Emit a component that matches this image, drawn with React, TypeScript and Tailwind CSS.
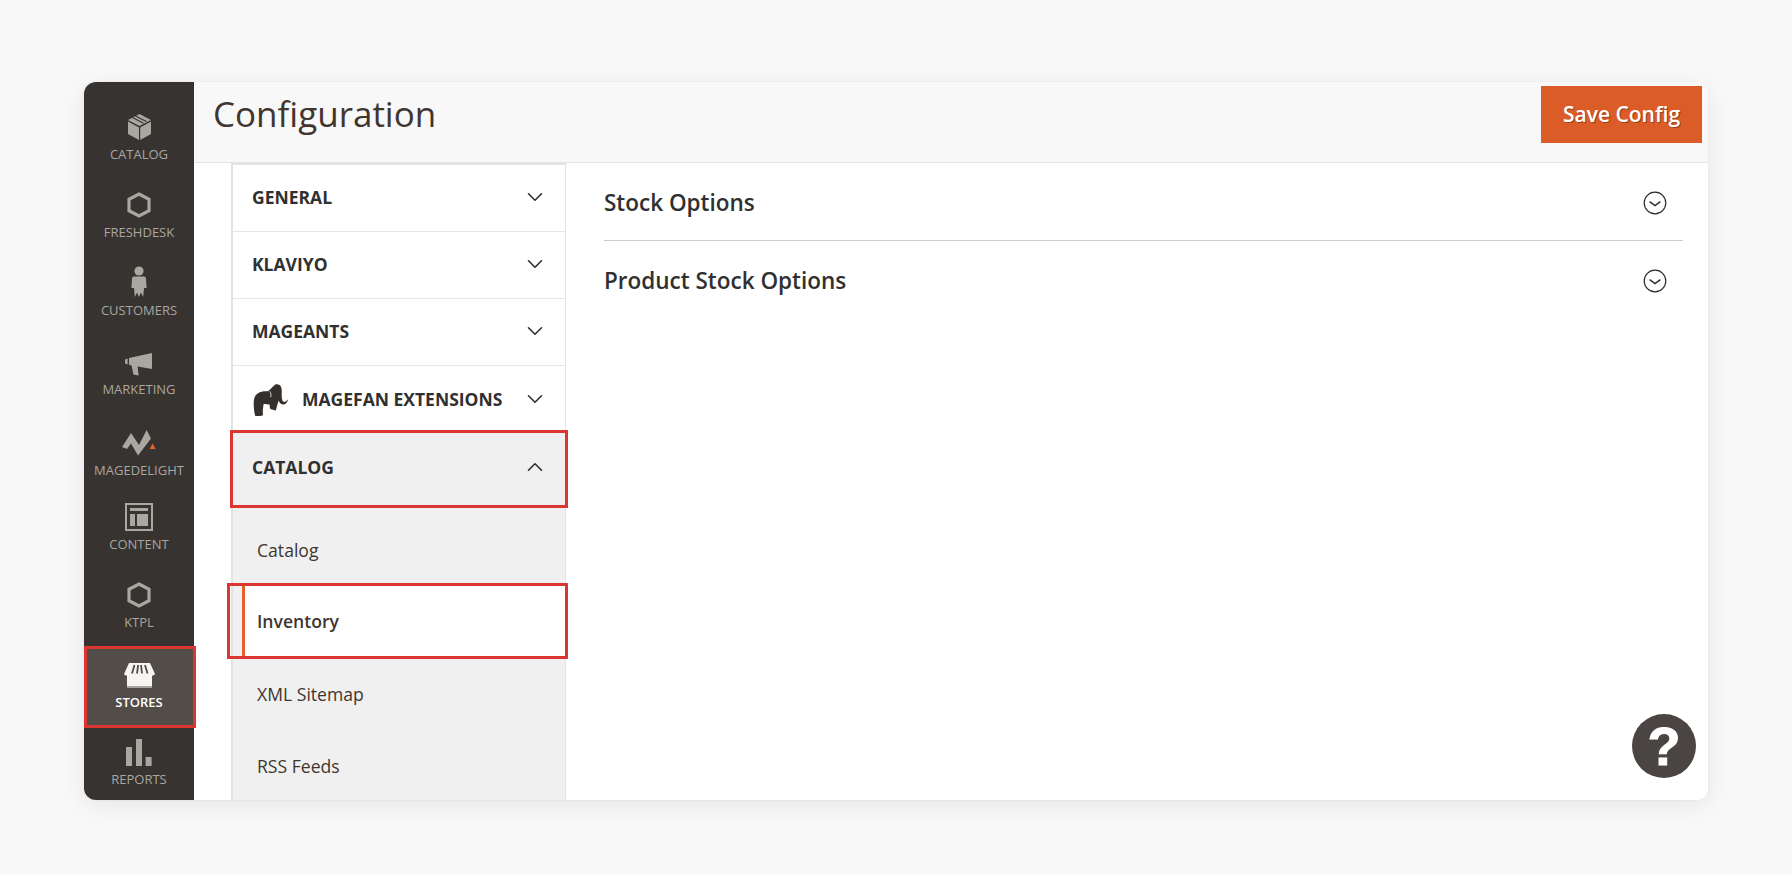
import { ChevronDown, ChevronUp } from "lucide-react";
import type { ReactNode } from "react";

const font = "font-['Open_Sans',sans-serif]";

function SideItem({
  label,
  icon,
  className = "",
}: {
  label: string;
  icon: ReactNode;
  className?: string;
}) {
  return (
    <div className={`flex flex-col items-center ${className}`}>
      <div className="flex h-[36px] items-center justify-center">{icon}</div>
      <div className="mt-px text-[13px] leading-4">{label}</div>
    </div>
  );
}

function Cube() {
  return (
    <svg width="23" height="26" viewBox="0 0 23 26" fill="currentColor">
      <path d="M11.5 0 L23 6 L11.5 12 L0 6 Z" />
      <path d="M0 7.6 L11 13.5 V26 L0 20 Z" />
      <path d="M23 7.6 L12.2 13.5 V26 L23 20 Z" />
      <path d="M7.5 2 L18.5 7.6 M4.5 3.6 L15.5 9.2" fill="none" stroke="#373330" strokeWidth="1.1" />
    </svg>
  );
}

function Hex() {
  return (
    <svg width="24" height="26" viewBox="0 0 24 26" fill="none" stroke="currentColor" strokeWidth="3.2">
      <path d="M12 2 L22 7.3 V18.7 L12 24 L2 18.7 V7.3 Z" />
    </svg>
  );
}

function Person() {
  return (
    <svg className="mb-[2px]" width="16" height="32" viewBox="0 0 16 32" fill="currentColor">
      <circle cx="8" cy="5" r="4.6" />
      <path d="M3.2 10.6 H12.8 C14.4 10.6 15 11.4 15 13 L15.6 22 H13 L12.2 31 L10 26.5 L8 31 L6 26.5 L3.8 31 L3 22 H0.4 L1 13 C1 11.4 1.6 10.6 3.2 10.6 Z" />
    </svg>
  );
}

function Megaphone() {
  return (
    <svg className="mt-[4px]" width="28" height="23" viewBox="0 0 28 23" fill="currentColor">
      <path d="M0 6.6 L2.6 5.6 V11.4 L0 10.4 Z" />
      <path d="M4 5 L27 0 V16 L12.6 13.6 L13.6 22.6 L8.4 21.4 L6.6 12.4 L4 11.8 Z" />
    </svg>
  );
}

function Delight() {
  return (
    <svg width="34" height="26" viewBox="0 0 34 26" fill="currentColor">
      <path d="M0 17 L9 3 L17 15 L24.6 0 L29 8.6 L16 25.4 L9 13.6 L5 19 Z" />
      <path d="M27.6 19 L30.6 13.4 L33.6 19 Z" fill="#e8622a" />
    </svg>
  );
}

function Content() {
  return (
    <svg width="28" height="28" viewBox="0 0 28 28" fill="currentColor">
      <path fillRule="evenodd" d="M0 0 H28 V28 H0 Z M2 2 V26 H26 V2 Z" />
      <rect x="5" y="5" width="18" height="3" />
      <rect x="5" y="11" width="5" height="12" />
      <rect x="12" y="11" width="11" height="12" />
    </svg>
  );
}

function Store() {
  return (
    <svg width="31" height="25" viewBox="0 0 31 25" fill="none">
      <path d="M5 0 H26 L31 11 C30 13 27 13 26 12 C25 13 22 13 21 12 C20 13 17 13 15.5 12 C14 13 11 13 10 12 C9 13 6 13 5 12 C4 13 1 13 0 11 Z" fill="#f7f5f1" />
      <rect x="3" y="12" width="25" height="11" fill="#f7f5f1" />
      <rect x="3" y="23" width="25" height="2" fill="#a8a49e" />
      <path d="M10.5 2 L8 10.5 M14.2 2 L13 10.5 M17 2 L18 10.5 M21 2 L23.5 10.5" stroke="#524d49" strokeWidth="1.8" />
    </svg>
  );
}

function Bars() {
  return (
    <svg width="26" height="27" viewBox="0 0 26 27" fill="currentColor">
      <rect x="0" y="8" width="6" height="19" />
      <rect x="10" y="0" width="6" height="27" />
      <rect x="19.6" y="18" width="6" height="9" />
    </svg>
  );
}

function Elephant() {
  return (
    <svg className="mt-[2px]" width="35" height="32" viewBox="0 0 105 97" fill="#33302e">
      <path d="M6 96 C2 80 0 60 3 45 C6 28 24 20 44 22 C52 18 58 8 66 2 C74 -1 84 2 86 14 C88 26 84 42 90 52 C94 56 100 54 104 47 L105 49 C102 60 92 66 84 60 C80 57 78 52 77 50 C75 58 72 66 70 76 L68 80 L52 76 C50 70 50 64 50 62 C44 62 38 62 32 60 C30 70 28 84 30 94 C24 98 12 98 6 96 Z" />
      <path d="M50 22 C54 28 55 34 53 40" fill="none" stroke="#fff" strokeWidth="2.4" />
    </svg>
  );
}

function CircleChevron() {
  return (
    <svg width="24" height="24" viewBox="0 0 24 24" fill="none" stroke="#2f2b29">
      <circle cx="12" cy="12" r="10.8" strokeWidth="1.2" />
      <path d="M6.6 10.6 L12 14.6 L17.4 10.6" strokeWidth="1.4" />
    </svg>
  );
}

function NavRow({
  children,
  className,
}: {
  children: ReactNode;
  className: string;
}) {
  return (
    <div className={`flex items-center justify-between pl-[19px] pr-[17px] text-[17.5px] font-bold text-[#303030] ${className}`}>
      {children}
    </div>
  );
}

function SubRow({
  children,
  className,
}: {
  children: ReactNode;
  className: string;
}) {
  return (
    <div className={`flex items-center pl-[24px] text-[17.6px] text-[#41362f] ${className}`}>
      {children}
    </div>
  );
}

export default function App() {
  return (
    <div className={`h-[875px] w-[1792px] overflow-hidden bg-[#f8f8f8] pl-[84px] pt-[82px] ${font}`}>
      <div className="relative flex h-[718px] w-[1624px] rounded-[10px] bg-white shadow-[0_6px_24px_rgba(0,0,0,0.07),0_0_2px_rgba(0,0,0,0.08)]">
        <aside className="relative h-full w-[110px] shrink-0 rounded-l-[12px] bg-[#373330] pt-[27px] text-[#aaa6a0]">
          <SideItem label="CATALOG" icon={<Cube />} />
          <SideItem label="FRESHDESK" icon={<Hex />} className="mt-[25px]" />
          <SideItem label="CUSTOMERS" icon={<Person />} className="mt-[25px]" />
          <SideItem label="MARKETING" icon={<Megaphone />} className="mt-[26px]" />
          <SideItem label="MAGEDELIGHT" icon={<Delight />} className="mt-[28px]" />
          <SideItem label="CONTENT" icon={<Content />} className="mt-[21px]" />
          <SideItem label="KTPL" icon={<Hex />} className="mt-[25px]" />
          <div className="relative mt-[16px] h-[82px] bg-[#524d49] pt-[11px] text-white">
            <SideItem label="STORES" icon={<Store />} className="font-semibold" />
            <div className="absolute -right-[2px] left-0 top-0 bottom-0 border-3 border-[#dc3632]" />
          </div>
          <SideItem label="REPORTS" icon={<Bars />} className="mt-[6px]" />
        </aside>

        <div className="flex min-w-0 flex-1 flex-col">
          <header className="flex h-[81px] items-start justify-between rounded-tr-[10px] border-b border-[#e3e3e3] bg-[#f8f8f8] pl-[19px] pr-[6px] pt-[4px]">
            <h1 className="mt-[3px] text-[35px] leading-[50px] font-normal text-[#41362f]">Configuration</h1>
            <button className="h-[57px] w-[161px] bg-[#dc5c27] text-[21px] font-semibold text-white [text-shadow:1px_1px_0_#9a3f18]">
              Save Config
            </button>
          </header>

          <div className="flex min-h-0 flex-1">
            <nav className="relative ml-[37px] h-full w-[335px] shrink-0 overflow-visible border-x-2 border-t-2 border-r-1 border-[#e3e3e3]">
              <NavRow className="h-[67px] border-b border-[#e6e6e6] pb-[2px]">
                GENERAL
                <ChevronDown size={26} strokeWidth={1.5} />
              </NavRow>
              <NavRow className="h-[67px] border-b border-[#e6e6e6] pb-[2px]">
                KLAVIYO
                <ChevronDown size={26} strokeWidth={1.5} />
              </NavRow>
              <NavRow className="h-[67px] border-b border-[#e6e6e6] pb-[2px]">
                MAGEANTS
                <ChevronDown size={26} strokeWidth={1.5} />
              </NavRow>
              <NavRow className="h-[66px] !pl-[20px]">
                <span className="flex items-center gap-[14px]">
                  <Elephant />
                  MAGEFAN EXTENSIONS
                </span>
                <ChevronDown size={26} strokeWidth={1.5} />
              </NavRow>
              <div className="relative">
                <NavRow className="h-[74px] border-b border-[#dfdfdf] bg-[#f0f0f0] pb-[3px]">
                  CATALOG
                  <ChevronUp size={26} strokeWidth={1.5} />
                </NavRow>
                <div className="absolute -left-[3px] -right-[3px] -top-[2px] -bottom-[2px] border-3 border-[#dc3632]" />
              </div>
              <div className="bg-[#f0f0f0]">
                <SubRow className="h-[80px] pt-[8px]">Catalog</SubRow>
                <div className="relative">
                  <SubRow className="ml-[9px] h-[70px] border-l-3 border-[#e2622b] bg-white !pl-[12px] font-semibold text-[#303a4a]">
                    Inventory
                  </SubRow>
                  <div className="absolute -left-[6px] -right-[3px] -top-[3px] -bottom-[3px] border-3 border-[#dc3632]" />
                </div>
                <SubRow className="h-[74px] pt-[2px]">XML Sitemap</SubRow>
                <SubRow className="h-[70px] pt-[3px]">RSS Feeds</SubRow>
              </div>
            </nav>

            <main className="flex-1 pl-[38px] pr-[25px]">
              <div className="flex h-[78px] items-center justify-between border-b border-[#cccccc] pr-[16px] pt-[2px]">
                <span className="text-[22.5px] font-[560] text-[#303030]">Stock Options</span>
                <CircleChevron />
              </div>
              <div className="flex h-[78px] items-center justify-between pr-[16px] pt-[2px]">
                <span className="text-[22.5px] font-[560] text-[#303030]">Product Stock Options</span>
                <CircleChevron />
              </div>
            </main>
          </div>
        </div>

        <div className="absolute left-[1548px] top-[632px] flex h-[64px] w-[64px] items-center justify-center rounded-full bg-[#4a4542] font-['Liberation_Sans',sans-serif] text-[54px] font-bold text-white [-webkit-text-stroke:1px_white]">
          ?
        </div>
      </div>
    </div>
  );
}
